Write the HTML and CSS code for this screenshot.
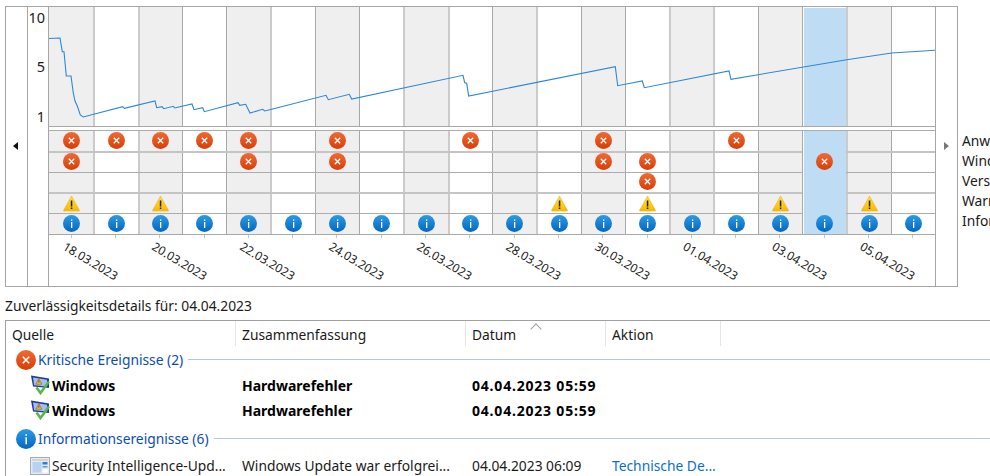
FILE: index.html
```html
<!DOCTYPE html>
<html lang="de">
<head>
<meta charset="utf-8">
<title>Zuverlässigkeitsverlauf</title>
<link rel="stylesheet" href="styles.css">
</head>
<body>
<svg class="defs" aria-hidden="true">
  <defs>
    <linearGradient id="gErr" x1="0" y1="0" x2="0" y2="1"><stop offset="0" stop-color="#ee6b33"/><stop offset="1" stop-color="#d83d08"/></linearGradient>
    <linearGradient id="gInf" x1="0" y1="0" x2="0" y2="1"><stop offset="0" stop-color="#2c9be6"/><stop offset="1" stop-color="#0467bf"/></linearGradient>
    <linearGradient id="gWarn" x1="0" y1="0" x2="0" y2="1"><stop offset="0" stop-color="#ffe04a"/><stop offset="1" stop-color="#fbb800"/></linearGradient>
    <symbol id="err" viewBox="0 0 17 17"><circle cx="8.5" cy="8.5" r="8.5" fill="url(#gErr)"/><path d="M5.8 5.8l5.4 5.4M11.2 5.8l-5.4 5.4" stroke="#fff" stroke-width="1.3" fill="none"/></symbol>
    <symbol id="inf" viewBox="0 0 17 17"><circle cx="8.5" cy="8.5" r="8.5" fill="url(#gInf)"/><rect x="8" y="7" width="1.3" height="6" fill="#fff"/><rect x="8" y="4.4" width="1.3" height="1.4" fill="#fff"/></symbol>
    <symbol id="warn" viewBox="0 0 17 17"><path d="M8.5 1L16.5 15.5Q16.5 16 16 16H1Q.5 16 .5 15.5Z" fill="url(#gWarn)" stroke="#e8a800" stroke-width=".5"/><rect x="7.8" y="5.5" width="1.5" height="6" fill="#222"/><rect x="7.8" y="12.5" width="1.5" height="1.5" fill="#222"/></symbol>
    <symbol id="win" viewBox="0 0 20 20">
      <path d="M1 .5L19 3.5V13L3 11.5Z" fill="#1f3a9e"/>
      <path d="M3 2.4L17 4.8V11.5L4.2 10.2Z" fill="#a9bcee"/>
      <path d="M8.8 3.8L11.8 9.2H5.8Z" fill="#f2c81e" stroke="#5f5210" stroke-width=".5"/>
      <rect x="8.5" y="5.5" width=".8" height="2.2" fill="#333"/>
      <path d="M6.5 12.5L10.5 18L19 6.5" fill="none" stroke="#5cb548" stroke-width="2.6"/>
    </symbol>
    <symbol id="app" viewBox="0 0 20 18">
      <rect x=".5" y=".5" width="19" height="17" fill="#e6e9ee" stroke="#a4abb4"/>
      <rect x="2" y="2" width="16" height="2" fill="#cdd4db"/>
      <rect x="2.5" y="5" width="9" height="10.5" fill="#b6d3ef"/>
      <rect x="12.5" y="5" width="5" height="2.5" fill="#2f7fd0"/>
      <rect x="12.5" y="9" width="5" height="1.5" fill="#5a9bdc"/>
      <rect x="12.5" y="12" width="5" height="3.5" fill="#fff"/>
    </symbol>
  </defs>
</svg>

<main class="page">
  <section class="top">
    <div class="frame">
      <div class="nav"><i class="arrow-left"></i></div>
      <div class="axis"><span>10</span><span>5</span><span>1</span></div>
      <div class="plot">
        <div class="graph grid">
          <span></span><span></span><span></span><span></span><span></span><span></span><span></span><span></span><span></span><span></span><span></span><span></span><span></span><span></span><span></span><span></span><span></span><span></span><span></span><span></span>
          <svg class="line" viewBox="0 0 886 120" width="886" height="120"><polyline transform="translate(-49 -7)" points="49,38.5 60,38 62.3,51.7 64,51.7 66.3,76 71,76 73.3,93 75,101 77.3,106 80.3,115 83.3,117 122.7,106.7 124.3,108.3 155,101 156.7,107.7 162,106.7 163.7,108.7 173.3,106.3 174.7,108 192,104 194,109.7 202.7,107.7 204.3,111.7 238,102.7 239.7,105.3 245.7,104.3 250,113 262.7,109.3 264.7,111 271.7,109.3 326,95.3 328.3,99.7 349.3,94.3 351.7,99 463,75.3 464.7,82.7 466.7,83.3 468.7,96 615.3,66.7 617.7,85.7 642.3,81 644.3,87.7 729,71 731,79.3 846.7,59.7 891.7,53 935,50.3"/></svg>
        </div>
        <div class="row grid first">
          <span><svg class="ico"><use href="#err"/></svg></span><span><svg class="ico"><use href="#err"/></svg></span><span><svg class="ico"><use href="#err"/></svg></span><span><svg class="ico"><use href="#err"/></svg></span><span><svg class="ico"><use href="#err"/></svg></span><span></span><span><svg class="ico"><use href="#err"/></svg></span><span></span><span></span><span><svg class="ico"><use href="#err"/></svg></span><span></span><span></span><span><svg class="ico"><use href="#err"/></svg></span><span></span><span></span><span><svg class="ico"><use href="#err"/></svg></span><span></span><span></span><span></span><span></span>
        </div>
        <div class="row grid soft">
          <span><svg class="ico"><use href="#err"/></svg></span><span></span><span></span><span></span><span><svg class="ico"><use href="#err"/></svg></span><span></span><span><svg class="ico"><use href="#err"/></svg></span><span></span><span></span><span></span><span></span><span></span><span><svg class="ico"><use href="#err"/></svg></span><span><svg class="ico"><use href="#err"/></svg></span><span></span><span></span><span></span><span><svg class="ico"><use href="#err"/></svg></span><span></span><span></span>
        </div>
        <div class="row grid">
          <span></span><span></span><span></span><span></span><span></span><span></span><span></span><span></span><span></span><span></span><span></span><span></span><span></span><span><svg class="ico"><use href="#err"/></svg></span><span></span><span></span><span></span><span></span><span></span><span></span>
        </div>
        <div class="row grid soft">
          <span><svg class="ico"><use href="#warn"/></svg></span><span></span><span><svg class="ico"><use href="#warn"/></svg></span><span></span><span></span><span></span><span></span><span></span><span></span><span></span><span></span><span><svg class="ico"><use href="#warn"/></svg></span><span></span><span><svg class="ico"><use href="#warn"/></svg></span><span></span><span></span><span><svg class="ico"><use href="#warn"/></svg></span><span></span><span><svg class="ico"><use href="#warn"/></svg></span><span></span>
        </div>
        <div class="row grid last">
          <span><svg class="ico"><use href="#inf"/></svg></span><span><svg class="ico"><use href="#inf"/></svg></span><span><svg class="ico"><use href="#inf"/></svg></span><span><svg class="ico"><use href="#inf"/></svg></span><span><svg class="ico"><use href="#inf"/></svg></span><span><svg class="ico"><use href="#inf"/></svg></span><span><svg class="ico"><use href="#inf"/></svg></span><span><svg class="ico"><use href="#inf"/></svg></span><span><svg class="ico"><use href="#inf"/></svg></span><span><svg class="ico"><use href="#inf"/></svg></span><span><svg class="ico"><use href="#inf"/></svg></span><span><svg class="ico"><use href="#inf"/></svg></span><span><svg class="ico"><use href="#inf"/></svg></span><span><svg class="ico"><use href="#inf"/></svg></span><span><svg class="ico"><use href="#inf"/></svg></span><span><svg class="ico"><use href="#inf"/></svg></span><span><svg class="ico"><use href="#inf"/></svg></span><span><svg class="ico"><use href="#inf"/></svg></span><span><svg class="ico"><use href="#inf"/></svg></span><span><svg class="ico"><use href="#inf"/></svg></span>
        </div>
        <div class="ticks grid">
          <span></span><span></span><span></span><span></span><span></span><span></span><span></span><span></span><span></span><span></span><span></span><span></span><span></span><span></span><span></span><span></span><span></span><span></span><span></span><span></span>
        </div>
        <div class="dates">
          <span>18.03.2023</span><span>20.03.2023</span><span>22.03.2023</span><span>24.03.2023</span><span>26.03.2023</span><span>28.03.2023</span><span>30.03.2023</span><span>01.04.2023</span><span>03.04.2023</span><span>05.04.2023</span>
        </div>
      </div>
      <div class="nav nav-right"><i class="arrow-right"></i></div>
    </div>
    <ul class="legend">
      <li>Anwendungsfehler</li>
      <li>Windows-Fehler</li>
      <li>Verschiedene Fehler</li>
      <li>Warnungen</li>
      <li>Informationen</li>
    </ul>
  </section>

  <h1 class="title">Zuverlässigkeitsdetails für: 04.04.2023</h1>

  <section class="list">
    <header class="head">
      <div class="col c1">Quelle</div>
      <div class="col c2">Zusammenfassung</div>
      <div class="col c3">Datum<i class="caret"></i></div>
      <div class="col c4">Aktion</div>
    </header>
    <div class="group g1">
      <svg class="gico"><use href="#err"/></svg><span class="gname">Kritische Ereignisse (2)</span><i class="rule"></i>
    </div>
    <div class="item strong">
      <div class="c1 name"><svg class="iico"><use href="#win"/></svg><span>Windows</span></div>
      <div class="c2">Hardwarefehler</div>
      <div class="c3">04.04.2023 05:59</div>
    </div>
    <div class="item strong">
      <div class="c1 name"><svg class="iico"><use href="#win"/></svg><span>Windows</span></div>
      <div class="c2">Hardwarefehler</div>
      <div class="c3">04.04.2023 05:59</div>
    </div>
    <div class="group g2">
      <svg class="gico"><use href="#inf"/></svg><span class="gname">Informationsereignisse (6)</span><i class="rule"></i>
    </div>
    <div class="item">
      <div class="c1 name"><svg class="iico app"><use href="#app"/></svg><span>Security Intelligence-Upd...</span></div>
      <div class="c2">Windows Update war erfolgrei...</div>
      <div class="c3">04.04.2023 06:09</div>
      <div class="c4 link">Technische De...</div>
    </div>
  </section>
</main>
</body>
</html>
```

FILE: styles.css
```css
* { box-sizing: border-box; }
html, body { margin: 0; padding: 0; height: 100%; overflow: hidden; background: #fff; }
body { font-family: "Noto Sans", "Open Sans", sans-serif; font-size: 13.8px; color: #1a1a1a; }
.defs { position: absolute; width: 0; height: 0; }
.page { width: 990px; height: 476px; overflow: hidden; padding: 6px 0 0 5px; }

.top { display: flex; height: 281px; }
.frame { display: flex; flex: none; width: 953px; height: 281px; border: 1px solid #a6a6a6; }
.nav { flex: none; width: 22px; border-right: 1px solid #a6a6a6; padding: 135px 0 0 7px; }
.nav-right { border-right: 0; border-left: 1px solid #a6a6a6; padding-left: 8px; }
.arrow-left, .arrow-right { display: block; width: 0; height: 0; border-style: solid; border-color: transparent; border-width: 4.5px 0; }
.arrow-left { border-right: 5px solid #111; }
.arrow-right { border-left: 5px solid #777; }

.axis { flex: none; width: 21px; border-right: 1px solid #a6a6a6; display: flex; flex-direction: column; align-items: flex-end; gap: 29px; padding: 0 3px 0 0; line-height: 20px; font-size: 14.5px; }
.axis span:last-child { margin-top: 1px; }

.plot { flex: none; width: 886px; }
.grid { display: grid; grid-template-columns: repeat(20, 44.3px); }
.grid > span { display: flex; align-items: center; justify-content: center; border-left: 1px solid #a8a8a8; }
.graph > span:nth-child(odd), .row > span:nth-child(odd) { background: #efefef; }
.graph > span:first-child, .row > span:first-child { border-left: 0; }
.graph > span:nth-child(2), .row > span:nth-child(2),
.graph > span:nth-child(3), .row > span:nth-child(3),
.graph > span:nth-child(6), .row > span:nth-child(6),
.graph > span:nth-child(9), .row > span:nth-child(9),
.graph > span:nth-child(10), .row > span:nth-child(10),
.graph > span:nth-child(12), .row > span:nth-child(12),
.graph > span:nth-child(15), .row > span:nth-child(15),
.graph > span:nth-child(16), .row > span:nth-child(16),
.graph > span:nth-child(19), .row > span:nth-child(19) { border-left: 2px solid #cbcbcb; }
.graph > span:nth-child(18), .row > span:nth-child(18) { background: #bfdcf5; box-shadow: inset 1px 0 #fff; }
.row:not(.first) > span:nth-child(18) { margin-top: -2px; padding-top: 2px; }
.graph > span:nth-child(18) { box-shadow: inset 1px 1px #fff; }

.graph { position: relative; height: 120px; border-bottom: 1px solid #a8a8a8; }
.line { position: absolute; left: 0; top: 0; overflow: visible; }
.line polyline { fill: none; stroke: #2b88d8; stroke-width: 1.1; }

.row { height: 20.8px; border-top: 1px solid #acacac; }
.row.first { margin-top: 3px; }
.row.soft { border-top: 2px solid #c4c4c4; }
.row.last { height: 22px; border-bottom: 1px solid #a8a8a8; }
.ico { width: 17px; height: 17px; display: block; flex: none; }
.row .ico { margin-top: -1px; }

.ticks { height: 3px; }
.ticks > span { border: 0; align-items: flex-start; }
.ticks > span::before { content: ""; width: 1px; height: 3px; background: #c4c4c4; }

.dates { display: flex; }
.dates span { flex: 0 0 88.6px; display: flex; justify-content: center; padding: 15px 0 0 2px; font-size: 12px; line-height: 18px; white-space: nowrap; transform: rotate(31deg); }

.legend { list-style: none; margin: 125px 0 0 4px; padding: 0; line-height: 20px; white-space: nowrap; }

.title { margin: 9px 0 0; font-size: 13.8px; font-weight: 400; line-height: 19px; white-space: nowrap; }

.list { margin-top: 5px; width: 985px; height: 160px; border-top: 1px solid #a0a0a0; border-left: 1px solid #a0a0a0; position: relative; }
.head { display: flex; height: 25px; line-height: 27px; }
.col { position: relative; padding-left: 6px; border-right: 1px solid #e5e5e5; }
.head .c1 { width: 230px; }
.head .c2 { width: 230px; }
.head .c3 { width: 140px; }
.head .c4 { width: 115px; }
.caret { position: absolute; left: 66px; top: 4px; width: 8px; height: 8px; border-left: 1px solid #a0a0a0; border-top: 1px solid #a0a0a0; transform: rotate(45deg); }

.group { display: flex; align-items: center; padding-left: 10px; color: #0b4db5; height: 26px; }
.g1 { margin-top: 1px; height: 25px; }
.g2 { margin-top: 2px; height: 29px; }
.gico { width: 20px; height: 20px; flex: none; }
.gname { margin-left: 2px; white-space: nowrap; }
.rule { flex: 1; height: 1px; background: #b4c6e6; margin-left: 5px; }

.item { display: flex; align-items: center; height: 25px; white-space: nowrap; }
.item.strong { font-weight: 700; color: #000; font-size: 14px; padding-top: 1px; }
.item.strong .c3 { letter-spacing: .8px; }
.item .c1 { width: 230px; padding-left: 24px; display: flex; align-items: center; }
.item .c2 { width: 230px; padding-left: 6px; }
.item .c3 { width: 140px; padding-left: 6px; }
.item .c4 { width: 115px; padding-left: 6px; }
.iico { width: 20px; height: 20px; flex: none; margin-right: 2px; }
.iico.app { height: 18px; margin-right: 2px; }
.link { color: #0a6fd1; }
```
